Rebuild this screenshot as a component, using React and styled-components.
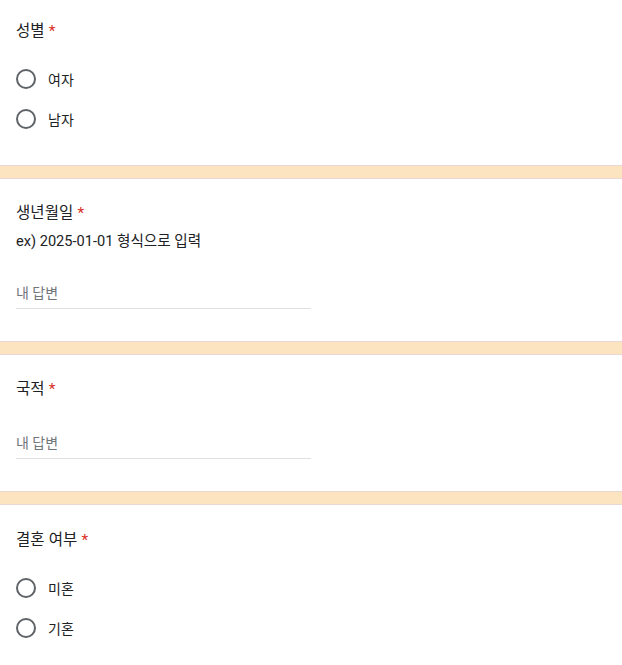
import React from "react";
import styled, { createGlobalStyle } from "styled-components";

const GlobalStyle = createGlobalStyle`
  html, body {
    margin: 0;
    padding: 0;
    background: #ffffff;
    overflow: hidden;
  }
  body {
    font-family: Roboto, "Noto Sans CJK KR", sans-serif;
    color: #202124;
  }
`;

const Page = styled.div`
  display: flex;
  flex-direction: column;
`;

const Section = styled.section`
  padding: ${(p) => p.$top}px 16px ${(p) => p.$bottom}px;
  background: #ffffff;
`;

const Divider = styled.div`
  height: 12px;
  background: #fde4c0;
  border-top: 1px solid #e9d8d2;
  border-bottom: 1px solid #e9d8d2;
`;

const Title = styled.div`
  font-size: 15.5px;
  line-height: 24px;
  letter-spacing: 0.1px;
`;

const Required = styled.span`
  color: #d93025;
  margin-left: 4px;
`;

const Helper = styled.div`
  font-size: 14.6px;
  line-height: 24px;
  margin-top: 4px;
`;

const Options = styled.div`
  display: flex;
  flex-direction: column;
  margin-top: 16px;
`;

const Option = styled.label`
  display: flex;
  align-items: center;
  gap: 12px;
  height: 40px;
  font-size: 14px;
  cursor: pointer;
`;

const Radio = styled.span`
  box-sizing: border-box;
  width: 20px;
  height: 20px;
  border-radius: 50%;
  border: 2px solid #5f6368;
  flex: none;
`;

const Answer = styled.input`
  display: block;
  box-sizing: border-box;
  width: 295px;
  height: 32px;
  margin-top: ${(p) => p.$gap}px;
  padding: 0;
  border: none;
  border-bottom: 1px solid #e0e0e0;
  outline: none;
  background: transparent;
  font-family: Roboto, "Noto Sans CJK KR", sans-serif;
  font-size: 14px;
  color: #202124;
  &::placeholder {
    color: #70757a;
  }
`;

const Question = ({ title }) => (
  <Title>
    {title}
    <Required>*</Required>
  </Title>
);

const Choice = ({ options }) => (
  <Options>
    {options.map((o) => (
      <Option key={o}>
        <Radio />
        {o}
      </Option>
    ))}
  </Options>
);

export default function App() {
  return (
    <Page>
      <GlobalStyle />
      <Section $top={19} $bottom={26}>
        <Question title="성별" />
        <Choice options={["여자", "남자"]} />
      </Section>
      <Divider />
      <Section $top={22} $bottom={32}>
        <Question title="생년월일" />
        <Helper>ex) 2025-01-01 형식으로 입력</Helper>
        <Answer $gap={24} placeholder="내 답변" />
      </Section>
      <Divider />
      <Section $top={22} $bottom={32}>
        <Question title="국적" />
        <Answer $gap={26} placeholder="내 답변" />
      </Section>
      <Divider />
      <Section $top={23} $bottom={25}>
        <Question title="결혼 여부" />
        <Choice options={["미혼", "기혼"]} />
      </Section>
    </Page>
  );
}
